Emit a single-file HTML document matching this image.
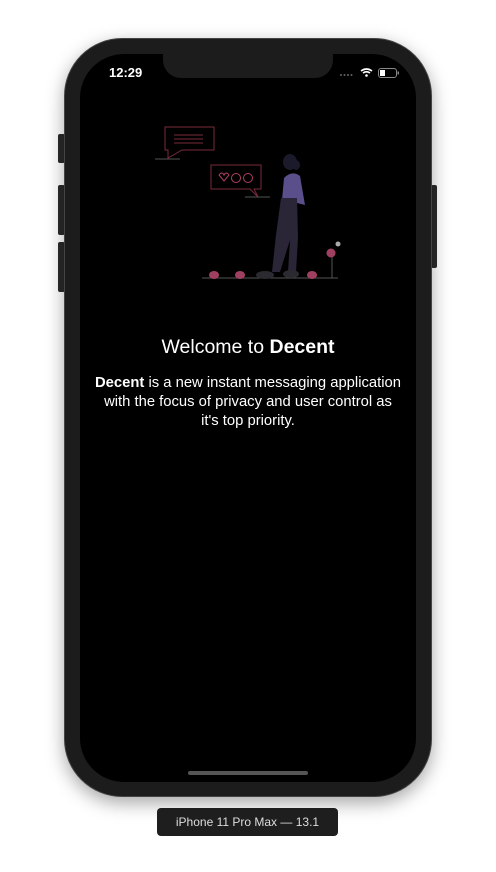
<!DOCTYPE html>
<html><head><style>
html,body{margin:0;padding:0;width:496px;height:872px;background:#fff;overflow:hidden;font-family:"Liberation Sans",sans-serif;}
.btn{position:absolute;background:#2a2a2a;border-radius:2px;}
.body{position:absolute;left:64px;top:38px;width:368px;height:759px;background:#1c1c1c;border-radius:58px;box-shadow:0 6px 18px rgba(0,0,0,.35);border:1px solid #444;box-sizing:border-box;}
.screen{position:absolute;left:80px;top:54px;width:336px;height:728px;background:#000;border-radius:44px;overflow:hidden;}
.notch{position:absolute;left:83px;top:0;width:170px;height:24px;background:#1c1c1c;border-radius:0 0 18px 18px;}
.time{position:absolute;left:29px;top:11px;color:#fff;font-size:13px;font-weight:bold;}
.home{position:absolute;left:108px;top:717px;width:120px;height:4px;border-radius:2px;background:#555;}
h1{position:absolute;left:0;width:336px;top:282px;margin:0;text-align:center;color:#fff;font-size:19.5px;font-weight:normal;}
p{position:absolute;left:0;width:336px;top:320px;margin:0;text-align:center;color:#fff;font-size:14.8px;line-height:19px;white-space:nowrap;}
.label{position:absolute;left:157px;top:808px;width:181px;height:28px;background:#1e1e1e;border-radius:4px;color:#ddd;font-size:12px;text-align:center;line-height:28px;}
</style></head><body>
<div class="btn" style="left:58px;top:134px;width:7px;height:29px"></div>
<div class="btn" style="left:58px;top:185px;width:7px;height:50px"></div>
<div class="btn" style="left:58px;top:242px;width:7px;height:50px"></div>
<div class="btn" style="left:431px;top:185px;width:6px;height:83px"></div>
<div class="body"></div>
<div class="screen">
<div class="notch"></div>
<div class="time">12:29</div>
<svg style="position:absolute;left:258px;top:13px" width="64" height="12">
<g fill="#666"><circle cx="3" cy="8" r="1"/><circle cx="6.5" cy="8" r="1"/><circle cx="10" cy="8" r="1"/><circle cx="13.5" cy="8" r="1"/></g>
<path d="M23 4 Q28.5 0 34 4 M25 6 Q28.5 3.5 32 6" stroke="#fff" stroke-width="1.6" fill="none"/><circle cx="28.5" cy="8.5" r="1.3" fill="#fff"/>
<rect x="40.5" y="1.5" width="18" height="9" rx="2.5" fill="none" stroke="#888"/><rect x="42" y="3" width="5" height="6" fill="#fff"/><rect x="59.5" y="4.5" width="1.5" height="3" fill="#888"/>
</svg>
<svg style="position:absolute;left:70px;top:66px" width="200" height="165" viewBox="150 120 200 165">
<g stroke="#7a2a3a" fill="none" stroke-width="1">
<path d="M165 127 H214 V150 H182 L168 158 V150 H165 Z"/>
<path d="M174 135 H203 M174 139 H203 M174 143 H203"/>
<path d="M211 165 H261 V189 H254 L258 197 L250 189 H211 Z"/>
</g>
<g stroke="#555" stroke-width="1"><path d="M155 159 H180 M245 197 H270 M202 278 H338"/></g>
<g stroke="#b04060" fill="none" stroke-width="1"><circle cx="236" cy="178" r="4.5"/><circle cx="248" cy="178" r="4.5"/><path d="M219 175 q3-4 5 0 q2-4 5 0 l-5 6 z"/></g>
<ellipse cx="290" cy="162" rx="7" ry="8" fill="#1a1a2a"/>
<ellipse cx="296" cy="165" rx="4" ry="5" fill="#1a1a2a"/>
<path d="M284 178 Q292 170 300 176 L305 205 L297 203 L282 200 Z" fill="#5a4f8a"/>
<path d="M281 198 H297 L298 238 L296 272 H288 L290 240 L280 272 H272 L276 235 Z" fill="#2a2638"/>
<ellipse cx="265" cy="275" rx="9" ry="4" fill="#2a2a30"/><ellipse cx="291" cy="274" rx="8" ry="4" fill="#2a2a30"/>
<g fill="#a04060"><ellipse cx="214" cy="275" rx="5" ry="4"/><ellipse cx="240" cy="275" rx="5" ry="4"/><ellipse cx="312" cy="275" rx="5" ry="4"/><circle cx="331" cy="253" r="4.5"/></g>
<circle cx="338" cy="244" r="2.5" fill="#aaa"/><path d="M332 257 V278" stroke="#555"/>
</svg>
<h1>Welcome to <b>Decent</b></h1>
<p><b>Decent</b> is a new instant messaging application<br>with the focus of privacy and user control as<br>it's top priority.</p>
<div class="home"></div>
</div>
<div class="label">iPhone 11 Pro Max — 13.1</div>
</body></html>
